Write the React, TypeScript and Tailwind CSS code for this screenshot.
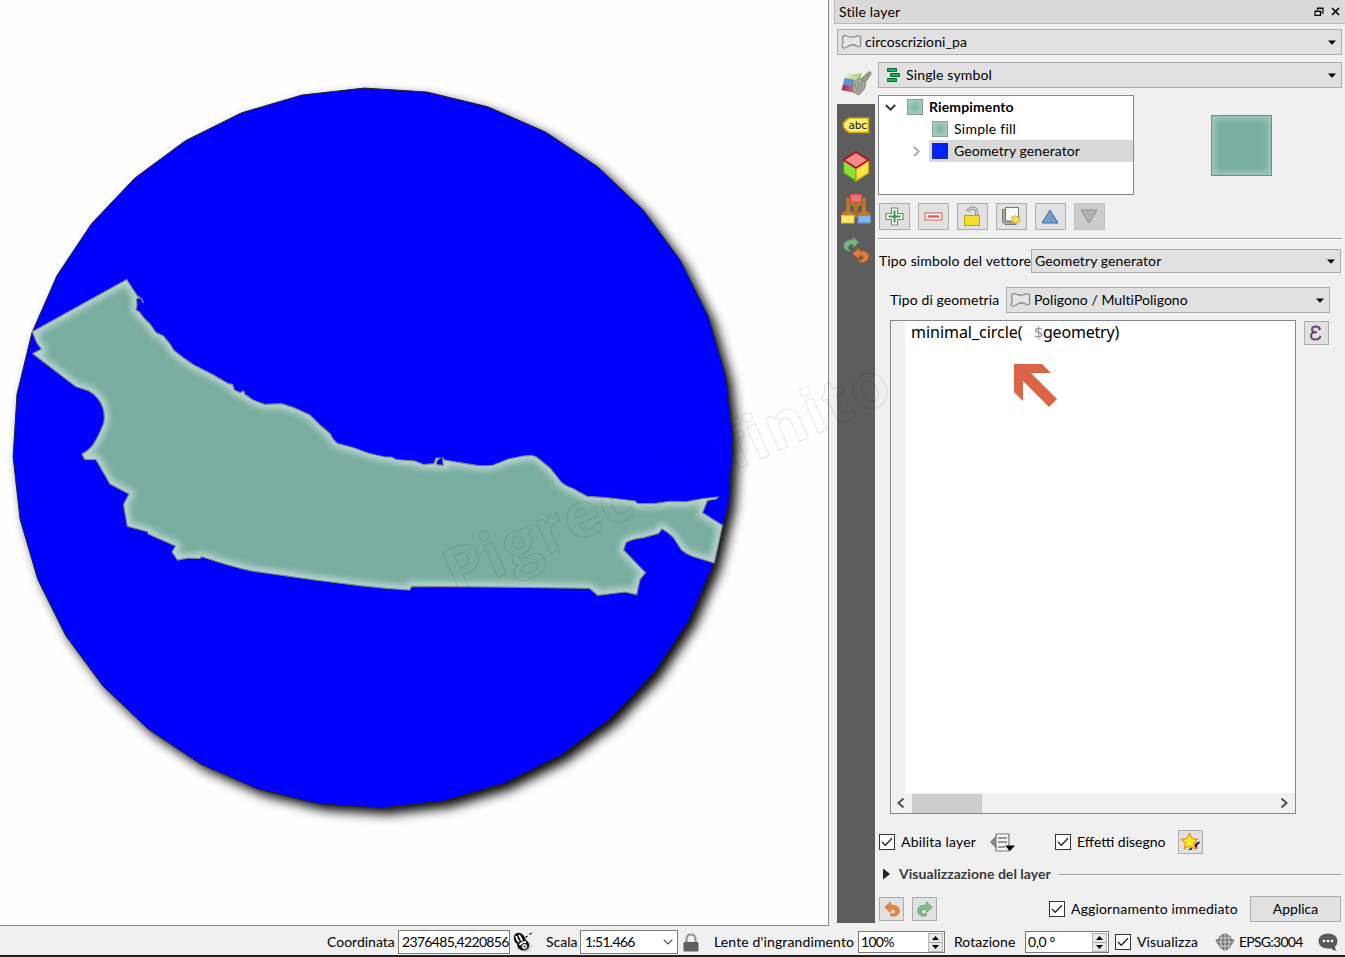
import React from "react";

const CX = 373;
const CY = 448;
const R = 360;
const circlePoints = Array.from({ length: 36 }, (_, i) => {
  const a = ((i * 10 - 1.4) * Math.PI) / 180;
  return `${(CX + R * Math.sin(a)).toFixed(1)},${(CY - R * Math.cos(a)).toFixed(1)}`;
}).join(" ");

const LAND =
  "M126.700 279.500L137.300 296L139 298L136.500 299L137 305L136 310L139.500 312L143.300 317.300L150 324L156 332.500L163.500 336L170 344L174 350.500Q183 358 193.500 364.700L213 374.700L228.500 383.700L232.500 384.500L234.500 390L240 392.500L244 391L244.500 394L253 400L264.500 404.300L281.500 403.700L293.500 407.500L310 415L320 425L330 433.500Q333 440 337.500 443.500L353 447.500L370 453.700L385 457L391.500 457L396.500 459.700L415 461L423.500 464.500L434 463.700L436 458L440 458L436.500 461.500L436.700 464.700L443.300 465.300L442.500 458L444.500 460L460 462.700L476.500 465.300Q487 466 493.500 465L508.500 459L523.500 456L531.500 455.300L536.500 457L550 468L558 478Q562 485 573 488.500L587 496.300L606.500 497.700L635 501L637.500 503.300L653.500 503.700L670 501.300L686.500 501.700L703.500 498.500L718 497L716.500 499L707.500 500.500L702.500 512.700L722.500 525.300L714.300 563L693.500 556.700Q686 554 681.500 550L673.500 537.700Q668 532 662 528.700L658.500 533.500L643.500 537.700Q632 539 626 542.500L623.500 550L645.500 572.700L640 579.500L636.700 594.700L625 592L597.500 595.300L589.500 588.300L520 587.300L411.700 586.300L409.700 590L386.700 588.300L360 585.700L315 580L250 570.700Q230 566 201.700 556.700L200 558.500L188.500 558L177.500 560L172 552L175.500 546L148.300 534L147.500 531.700L127.300 526.300L123.500 504.500L129 494L110 484L96 459.700L84.700 459.300L82 454Q91 449 95 441.700Q101 431 104 422Q105 412 102.500 406.700Q99 397 88.500 390.700L76 386.700L32.700 353.700L41.300 349L36.700 342.700L32.300 331.700Z";

function MapCanvas() {
  return (
    <svg width="828" height="925" viewBox="0 0 828 925" className="block">
      <defs>
        <filter id="shadow" x="-10%" y="-10%" width="120%" height="120%">
          <feGaussianBlur stdDeviation="6" />
        </filter>
        <filter id="glow" x="-10%" y="-10%" width="120%" height="120%">
          <feGaussianBlur stdDeviation="3" />
        </filter>
        <clipPath id="land">
          <path d={LAND} />
        </clipPath>
      </defs>
      <rect width="828" height="925" fill="#fefefe" />
      <polygon points={circlePoints} fill="#000" filter="url(#shadow)" transform="translate(6 6)" />
      <polygon points={circlePoints} fill="#0000ff" stroke="#222" strokeWidth="1" />
      <path d={LAND} fill="#78ada0" />
      <g clipPath="url(#land)">
        <path d={LAND} fill="none" stroke="#b9d6ce" strokeWidth="9.500" filter="url(#glow)" />
      </g>
      <path d={LAND} fill="none" stroke="#7b8580" strokeWidth="1.200" />
      <path d="M137.300 296Q141 297 143.500 303" fill="none" stroke="#7b8580" strokeWidth="1.500" />
    </svg>
  );
}

function Arrow() {
  return (
    <svg width="8" height="5" viewBox="0 0 8 5" className="block shrink-0">
      <path d="M0 .5H8L4 4.700Z" fill="#000" />
    </svg>
  );
}

function PolyIcon() {
  return (
    <svg width="21" height="17" viewBox="0 0 21 17" className="block shrink-0">
      <path
        d="M1.500 4.500Q1.500 1.500 4.500 1.500Q10 4.500 16 2Q19.500 1.200 19.500 3.500V11.500Q19 13.500 16.500 12.500Q11.500 8.800 6.500 12.800Q1.500 15.500 1.200 12.500Q2.800 8.500 1.500 4.500Z"
        fill="#e6e6e6"
        stroke="#8a8a8a"
        strokeWidth="1.300"
      />
    </svg>
  );
}

function Combo({ className, children }: { className: string; children: React.ReactNode }) {
  return (
    <div className={`flex items-center border border-[#adadad] bg-[#e1e1e1] ${className}`}>
      <div className="flex flex-1 items-center">{children}</div>
      <Arrow />
    </div>
  );
}

function Check() {
  return (
    <span className="flex h-4 w-4 shrink-0 items-center justify-center border border-[#333] bg-white">
      <svg width="12" height="10" viewBox="0 0 12 10">
        <path d="M1 5L4.300 8.300L11 1.300" fill="none" stroke="#222" strokeWidth="1.300" />
      </svg>
    </span>
  );
}

function ToolButton({ children, disabled }: { children: React.ReactNode; disabled?: boolean }) {
  return (
    <div
      className={
        disabled
          ? "flex h-[27px] w-[31px] items-center justify-center border border-[#bfbfbf] bg-[#cccccc] pr-px pb-px"
          : "flex h-[27px] w-[31px] items-center justify-center border border-[#adadad] bg-[#e1e1e1] pr-px pb-px"
      }
    >
      {children}
    </div>
  );
}

function CurlArrow({ color, edge, flip, size }: { color: string; edge: string; flip?: boolean; size: number }) {
  return (
    <svg width={size} height={size} viewBox="0 0 16 16" className="block">
      <path
        transform={flip ? "translate(16 0) scale(-1 1)" : undefined}
        d="M.8 6.200L6.500 1V4.200Q15.300 3.800 15.300 9.800Q15.200 14.600 9.500 15.200L6.500 14.500V13Q11.800 13.200 11.700 10.300Q11.500 8.200 6.500 8.300V11.500Z"
        fill={color}
        stroke={edge}
        strokeWidth=".7"
      />
    </svg>
  );
}

function Sidebar() {
  return (
    <div className="flex w-[38px] flex-col">
      <div className="flex h-[42px] items-center justify-center">
        <svg width="32" height="26" viewBox="0 0 32 26">
          <defs>
            <linearGradient id="styleGreen" x1="0" x2="1"><stop offset="0" stopColor="#e9efe0" /><stop offset="1" stopColor="#a9c96a" /></linearGradient>
            <linearGradient id="styleRed" x1="0" x2="1"><stop offset="0" stopColor="#a3224c" /><stop offset="1" stopColor="#d793a8" /></linearGradient>
          </defs>
          <path d="M6 3Q14 5 22 3L20 11L5 9Z" fill="url(#styleGreen)" />
          <path d="M4.500 8L14 9.500V17L3 14.500Z" fill="#5b93d3" />
          <path d="M3 14.500L14 16L19 24Q11 22 1.500 20Z" fill="url(#styleRed)" />
          <path d="M12 12Q18 10 20 8L26 14Q25 20 19 25Q15 24 12 20Q14 16 12 12Z" fill="#a9aaa0" stroke="#77796c" strokeWidth=".8" />
          <path d="M15 13L17 22M18 12L20 22M21 12L22 19" stroke="#7c7d74" strokeWidth=".8" />
          <path d="M21 9L28.500 2Q31.500 1 31 4L25 13Z" fill="#a19c80" stroke="#7d775f" strokeWidth=".8" />
        </svg>
      </div>
      <div className="flex h-[819px] flex-col items-center bg-[#5d5d5d] pt-[12px]">
        <div className="h-[35px]">
          <svg width="28" height="18" viewBox="0 0 28 18" className="block">
            <path d="M7 2H26.500V16.500H7Q4.500 15 1.500 11V7Q4.500 3.500 7 2Z" fill="#ffee76" stroke="#c8a400" strokeWidth="1.600" />
            <text x="6.500" y="13.200" fontFamily="DejaVu Sans" fontSize="10.500" textLength="18.500" fill="#111">abc</text>
          </svg>
        </div>
        <div className="h-[42px]">
          <svg width="28" height="31" viewBox="0 0 28 31" className="block">
            <path d="M1.500 9L14 17V30L1.500 22Z" fill="#8ce03a" stroke="#4c9a00" strokeWidth="1.300" />
            <path d="M26.500 9L14 17V30L26.500 22Z" fill="#ffe34c" stroke="#c8a400" strokeWidth="1.300" />
            <path d="M14 1L26.500 9L14 17L1.500 9Z" fill="#f28a8a" stroke="#b00c18" strokeWidth="1.500" />
          </svg>
        </div>
        <div className="h-[44px]">
          <svg width="32" height="32" viewBox="0 0 32 32" className="block">
            <path d="M10 9H22V12.500Q18 13 18 15L17.500 25H14.500L14 15Q14 13 10 12.500Z" fill="#b5732a" />
            <path d="M6.500 5Q8 3.500 9.500 5L10 17Q10 19 14 19.500V23H2V19.500Q6 19 6 17Z" fill="#c07b30" stroke="#9a5d1d" strokeWidth=".5" />
            <path d="M22.500 5Q24 3.500 25.500 5L26 17Q26 19 30 19.500V23H18V19.500Q22 19 22 17Z" fill="#c07b30" stroke="#9a5d1d" strokeWidth=".5" />
            <rect x="10.500" y="1.500" width="11" height="7.500" fill="#f0747a" stroke="#d8474e" />
            <rect x="1.500" y="22.500" width="12.500" height="7.500" fill="#ffe96b" stroke="#e0be35" />
            <rect x="18" y="22.500" width="12.500" height="7.500" fill="#83b3ea" stroke="#5c93d0" />
          </svg>
        </div>
        <svg width="28" height="28" viewBox="0 0 28 28" className="-mt-px block">
          <path d="M1.500 9Q2.500 3.500 11 3.500V.8L17 6.500L11 12V8.500Q6 8 6.500 13L9.500 15Q1.500 16.500 1.500 9Z" fill="#78b083" stroke="#4d8c5b" strokeWidth=".8" />
          <path d="M10.500 17.500L17 12V15Q26.500 14.500 26.500 20.500Q26.500 25 21 26.300L17 26V24.500Q22.500 23 21.500 21Q20 19.500 17 19.500V23Z" fill="#e07d42" stroke="#c55d1c" strokeWidth=".8" />
        </svg>
      </div>
    </div>
  );
}

function Swatch() {
  return <span className="h-4 w-4 border border-[#8b9b96] bg-[radial-gradient(#7db3a6,#a3cbc0_75%)]" />;
}

function SymbolTree() {
  return (
    <div className="h-[100px] w-[256px] border border-[#828790] bg-white text-black">
      <div className="flex h-[22px] items-center pl-[6px]">
        <svg width="11" height="7" viewBox="0 0 11 7"><path d="M.8 1L5.500 5.700L10.200 1" fill="none" stroke="#333" strokeWidth="1.800" /></svg>
        <span className="ml-[11px] flex"><Swatch /></span>
        <span className="ml-[6px] font-bold tracking-[0.13px]">Riempimento</span>
      </div>
      <div className="flex h-[22px] items-center pl-[53px]">
        <Swatch />
        <span className="ml-[6px] tracking-[0.25px]">Simple fill</span>
      </div>
      <div className="flex h-[22px] items-center">
        <span className="flex w-[50px] justify-end pr-[9px]">
          <svg width="7" height="11" viewBox="0 0 7 11"><path d="M1 .8L5.700 5.500L1 10.200" fill="none" stroke="#a0a0a0" strokeWidth="1.700" /></svg>
        </span>
        <div className="flex h-[22px] flex-1 items-center bg-[#d9d9d9] pl-[3px]">
          <span className="h-4 w-4 border border-[#1a2a9c] bg-[#0022ff]" />
          <span className="ml-[6px] tracking-[0.08px]">Geometry generator</span>
        </div>
      </div>
    </div>
  );
}

function SymbolTools() {
  return (
    <div className="mt-2 ml-px flex gap-2">
      <ToolButton>
        <svg width="19" height="19" viewBox="0 0 19 19">
          <path d="M6.500 1H12.500V6.500H18V12.500H12.500V18H6.500V12.500H1V6.500H6.500Z" fill="#fff" stroke="#5b9a68" strokeWidth="1.200" />
          <path d="M9.500 3.500V15.500M3.500 9.500H15.500" stroke="#3f9150" strokeWidth="2" />
        </svg>
      </ToolButton>
      <ToolButton>
        <svg width="19" height="9" viewBox="0 0 19 9">
          <rect x="1" y="1" width="17" height="7" fill="#fff" stroke="#ef6a6a" strokeWidth="1.200" />
          <rect x="3.500" y="3.300" width="12" height="2.400" fill="#ef5656" />
        </svg>
      </ToolButton>
      <ToolButton>
        <svg width="18" height="21" viewBox="0 0 18 21">
          <path d="M5 5.500Q6 2 9.500 2Q14 2.300 13.700 7V10" fill="none" stroke="#858585" strokeWidth="3" />
          <path d="M5 5.500Q6 2 9.500 2Q14 2.300 13.700 7V10" fill="none" stroke="#d4d4d4" strokeWidth="1.300" />
          <rect x="1.500" y="9.500" width="15" height="10" fill="#f1dc32" stroke="#c9a700" />
        </svg>
      </ToolButton>
      <ToolButton>
        <svg width="20" height="20" viewBox="0 0 20 20">
          <path d="M1.500 3.500H5V15H15V18.500H4L1.500 16Z" fill="#a8a8a0" stroke="#7a7a74" />
          <rect x="4.500" y="1.500" width="13" height="13.500" fill="#fafafa" stroke="#777" />
          <path d="M14.500 9.500L16 11L18.500 11L18 13.500L19 15.500L16.500 16L14.500 17.500L12.500 16L10.500 15.500L11.200 13L10.800 11L13 11Z" fill="#f4de5b" stroke="#bea01c" strokeWidth=".8" />
        </svg>
      </ToolButton>
      <ToolButton>
        <svg width="18" height="15" viewBox="0 0 18 15"><path d="M9 1L17 14H1Z" fill="#6f9dcc" stroke="#416d9c" /></svg>
      </ToolButton>
      <ToolButton disabled>
        <svg width="18" height="15" viewBox="0 0 18 15"><path d="M1 1H17L9 14Z" fill="#b3b3b3" stroke="#8f8f8f" /></svg>
      </ToolButton>
    </div>
  );
}

function Editor() {
  return (
    <div className="mt-[7px] ml-3 flex">
      <div className="flex h-[494px] w-[406px] flex-col border border-[#828790] bg-white">
        <div className="flex flex-1">
          <div className="w-[14px] bg-[#f0f0f0]" />
          <div className="flex-1 pl-[6px]">
            <div className="flex h-[22px] items-center font-['Noto_Sans',sans-serif] text-[16px]">
              <span className="w-[123px] tracking-[-0.03px]">minimal_circle(</span>
              <span className="tracking-[-0.2px]"><span className="text-[#969696]">$</span>geometry)</span>
            </div>
            <svg width="43" height="43" viewBox="0 0 43 43" className="mt-[21px] ml-[103px]">
              <path d="M0 0H28L37 9H17L43 35L35 43L9 17V37L0 28Z" fill="#da6445" />
            </svg>
          </div>
        </div>
        <div className="flex h-5 items-center bg-[#f0f0f0]">
          <svg width="20" height="12" viewBox="0 0 20 12"><path d="M12.500 1.500L7.500 6L12.500 10.500" fill="none" stroke="#505050" strokeWidth="2" /></svg>
          <div className="ml-px h-[19px] w-[70px] bg-[#cdcdcd]" />
          <svg width="20" height="12" viewBox="0 0 20 12" className="ml-auto"><path d="M6.500 1.500L11.500 6L6.500 10.500" fill="none" stroke="#505050" strokeWidth="2" /></svg>
        </div>
      </div>
      <div className="mt-px ml-2 flex h-6 w-[25px] items-center justify-center border border-[#adadad] bg-[#e1e1e1]">
        <svg width="13" height="16" viewBox="0 0 13 16" className="-ml-0.5">
          <path d="M10.800 4.200Q10.500 1.500 7 1.500Q3 1.600 3 4.500Q3.200 7.200 6.500 7.300H8M6.500 7.300Q2 7.600 2 11Q2.200 14.500 6.500 14.500Q10.800 14.300 11.500 11" fill="none" stroke="#6d4379" strokeWidth="2" />
          <circle cx="10.300" cy="4" r="1.300" fill="#6d4379" />
        </svg>
      </div>
    </div>
  );
}

function LayerOptions() {
  return (
    <>
      <div className="mt-[15px] ml-px flex h-[26px] items-center">
        <Check />
        <span className="ml-[6px] w-[89px] tracking-[0.2px]">Abilita layer</span>
        <svg width="26" height="20" viewBox="0 0 26 20" className="mt-px">
          <path d="M6 1H19V18H6V14L2 9L6 4Z" fill="#f5f5f5" stroke="#777" strokeWidth="1.200" />
          <path d="M.5 9L6 3.500V14.500Z" fill="#8a8a8a" stroke="#666" strokeWidth=".8" />
          <path d="M8 5H17M8 9H17M8 14H15" stroke="#777" strokeWidth="1.500" />
          <path d="M15 12.500H25L20 18Z" fill="#000" />
        </svg>
        <span className="ml-[39px]"><Check /></span>
        <span className="ml-[6px] w-[101px]">Effetti disegno</span>
        <div className="flex h-6 w-[25px] items-center justify-center border border-[#adadad] bg-[#e1e1e1]">
          <svg width="20" height="20" viewBox="0 0 20 20" className="-ml-0.5">
            <path d="M14.500 14Q14 10.500 20 9.500L19 12L17.500 12.500L16.500 18L15.500 15Z M8 18L12.500 14.500L11.500 18Z" fill="#222" />
            <path d="M9.500 1.500L12 6.500L17.500 7.500L13.500 11L14.500 16.500L9.500 14L4.500 16.500L5.500 11L1.500 7.500L7 6.500Z" fill="#ffee21" stroke="#f1931a" strokeWidth="1.300" />
          </svg>
        </div>
      </div>
      <div className="mt-[9px] flex h-5 items-center">
        <svg width="9" height="12" viewBox="0 0 9 12" className="ml-1"><path d="M1 .5L8 6L1 11.500Z" fill="#222" /></svg>
        <span className="ml-2 w-[152px] font-bold tracking-[0.04px] text-[#3a3a3a]">Visualizzazione del layer</span>
        <span className="mt-px ml-[7px] h-0.5 flex-1 border-t border-[#a0a0a0] bg-white" />
      </div>
      <div className="mt-3 ml-px flex h-[26px] items-center pr-px">
        <div className="flex h-6 w-[25px] items-center justify-center border border-[#adadad] bg-[#e1e1e1]">
          <CurlArrow color="#e8843f" edge="#cf6526" size={16} />
        </div>
        <div className="ml-2 flex h-6 w-[25px] items-center justify-center border border-[#adadad] bg-[#e1e1e1]">
          <CurlArrow color="#7ebc89" edge="#569463" flip size={16} />
        </div>
        <span className="ml-[112px]"><Check /></span>
        <span className="ml-[6px] tracking-[0.16px]">Aggiornamento immediato</span>
        <div className="ml-auto flex h-[26px] w-[91px] items-center justify-center border border-[#adadad] bg-[#e1e1e1]">Applica</div>
      </div>
    </>
  );
}

function StylePanel() {
  return (
    <div className="ml-[5px] flex w-[511px] flex-col">
      <div className="flex h-6 items-center border-b border-l border-[#b9b9b9] bg-[#dadada] pr-[5px] pl-1">
        <span className="flex-1 tracking-[0.15px]">Stile layer</span>
        <svg width="10" height="9" viewBox="0 0 10 9" className="mr-[7px]">
          <path d="M3.500 3V1H9V6H7M3 1.300H9" fill="none" stroke="#000" strokeWidth="1.200" />
          <path d="M1 4H6.500V8.300H1ZM1 4.300H6.500" fill="none" stroke="#000" strokeWidth="1.200" />
        </svg>
        <svg width="9" height="9" viewBox="0 0 9 9"><path d="M1 1L8 8M8 1L1 8" stroke="#000" strokeWidth="1.700" /></svg>
      </div>
      <div className="pt-[5px] pr-[3px] pl-[3px]">
        <Combo className="h-[26px] pr-[5px] pl-[3px]">
          <PolyIcon />
          <span className="ml-[3px] tracking-[0.08px]">circoscrizioni_pa</span>
        </Combo>
        <div className="mt-[7px] flex">
          <Sidebar />
          <div className="ml-[3px] flex-1">
            <Combo className="h-[26px] pr-[5px] pl-2">
              <svg width="13" height="14" viewBox="0 0 13 14">
                <path d="M.5 .5H9.500V3.500H.5ZM3.500 5.500H12.500V8.500H3.500ZM.5 10.500H9.500V13.500H.5Z" fill="#14b45d" stroke="#0c6b38" />
              </svg>
              <span className="ml-[6px] tracking-[0.15px]">Single symbol</span>
            </Combo>
            <div className="mt-[7px] flex">
              <SymbolTree />
              <div className="mt-5 ml-[77px] h-[61px] w-[61px] border border-[#7f8684] bg-[#78ada0] shadow-[inset_0_0_6px_3px_#a3cbc0]" />
            </div>
            <SymbolTools />
            <div className="mt-2 h-0.5 border-t border-[#a0a0a0] bg-white" />
            <div className="mt-[9px] ml-px flex h-6 items-center">
              <span className="w-[152px] tracking-[0.14px]">Tipo simbolo del vettore</span>
              <Combo className="h-6 w-[310px] pr-[5px] pl-[3px]"><span className="tracking-[0.1px]">Geometry generator</span></Combo>
            </div>
            <div className="mt-[14px] ml-3 flex h-[26px] items-center">
              <span className="w-[116px] tracking-[0.1px]">Tipo di geometria</span>
              <Combo className="h-[26px] w-[324px] pr-[5px] pl-[3px]">
                <PolyIcon />
                <span className="ml-[3px] tracking-[0.04px]">Poligono / MultiPoligono</span>
              </Combo>
            </div>
            <Editor />
            <LayerOptions />
          </div>
        </div>
      </div>
    </div>
  );
}

function Spin() {
  return (
    <span className="flex h-[19px] w-[15px] flex-col border border-[#b5b5b5] bg-[#e8e8e8]">
      <svg width="13" height="17" viewBox="0 0 13 17">
        <path d="M6.500 2L10 6H3Z M6.500 15L10 11H3Z" fill="#000" />
        <path d="M0 8.500H13" stroke="#aaa" />
      </svg>
    </span>
  );
}

function StatusBar() {
  return (
    <div className="flex h-[31px] items-center border-b-2 border-[#202127] pt-[3px] pl-[327px]">
      <span className="w-[71px]">Coordinata</span>
      <div className="flex h-6 w-[112px] items-center border border-[#7a7a7a] bg-white pl-[3px] tracking-[-0.68px]">2376485,4220856</div>
      <svg width="20" height="20" viewBox="0 0 20 20" className="ml-[3px]">
        <circle cx="13" cy="14.500" r="5.500" fill="#e2c9c9" />
        <path d="M1 4Q3 0 7 1Q11 2 13 8Q17 11 16 15Q14 19 9 18.500Q4 17 4 12Q0 9 1 4Z" fill="#111" />
        <path d="M3 4Q4 8 6 10M6 3Q8 6 9 9M6.500 13Q9 10 13 10" fill="none" stroke="#fff" strokeWidth="1.800" />
        <circle cx="11.500" cy="14.500" r="3" fill="#fff" stroke="#111" />
        <circle cx="11.500" cy="14.500" r="1" fill="#111" />
        <path d="M12.500 5.500L14.500 4M16.500 2.500L18.500 1" stroke="#111" strokeWidth="1.300" />
      </svg>
      <span className="ml-[13px] w-[34px]">Scala</span>
      <div className="flex h-6 w-[98px] items-center justify-between border border-[#7a7a7a] bg-white pr-1 pl-1">
        <span className="tracking-[-0.75px]">1:51.466</span>
        <svg width="10" height="6" viewBox="0 0 10 6"><path d="M.7 .7L5 5L9.300 .7" fill="none" stroke="#444" strokeWidth="1.100" /></svg>
      </div>
      <svg width="16" height="19" viewBox="0 0 16 19" className="ml-[5px]">
        <path d="M3.500 10V6Q3.500 1.500 8 1.500Q12.500 1.500 12.500 6V10" fill="none" stroke="#999" strokeWidth="2.200" />
        <rect x=".5" y="9" width="15" height="9.500" rx="1" fill="#5f5f5f" />
      </svg>
      <span className="ml-[15px] w-[144px] tracking-[0.13px]">Lente d'ingrandimento</span>
      <div className="flex h-[22px] w-[87px] items-center justify-between border border-[#7a7a7a] bg-white pr-px pl-[2px]">
        <span className="tracking-[-0.7px]">100%</span>
        <Spin />
      </div>
      <span className="ml-[9px] w-[71px] tracking-[0.05px]">Rotazione</span>
      <div className="flex h-[22px] w-[84px] items-center justify-between border border-[#7a7a7a] bg-white pr-px pl-[2px]">
        <span className="tracking-[-0.4px]">0,0 °</span>
        <Spin />
      </div>
      <span className="ml-[6px]"><Check /></span>
      <span className="ml-[6px] w-[78px] tracking-[0.1px]">Visualizza</span>
      <svg width="20" height="18" viewBox="0 0 20 18">
        <path d="M10 .5Q15 1 17 6L19.500 7Q19 10 17 11Q15 17 10 17.500Q5 17 3 11Q.5 10 .5 7L3 6Q5 1 10 .5Z" fill="#777" />
        <path d="M3 5H17M1 9H19M4 13H16M10 1V17M7 1.500Q4 9 7 16.500M13 1.500Q16 9 13 16.500" fill="none" stroke="#f0f0f0" strokeWidth=".7" />
      </svg>
      <span className="ml-[4px] w-[79px] tracking-[-0.75px]">EPSG:3004</span>
      <svg width="20" height="18" viewBox="0 0 20 18">
        <path d="M10 .5C15.500 .5 19.500 3.500 19.500 8C19.500 10.500 18.500 12.500 17 13.500Q17 16 18.500 17.800Q14.500 17.500 13 15.200Q11.500 15.500 10 15.500C4.500 15.500 .5 12.500 .5 8C.5 3.500 4.500 .5 10 .5Z" fill="#595959" />
        <circle cx="6" cy="8" r="1.300" fill="#fff" /><circle cx="10" cy="8" r="1.300" fill="#fff" /><circle cx="14" cy="8" r="1.300" fill="#fff" />
      </svg>
    </div>
  );
}

export default function App() {
  return (
    <div className="relative h-[957px] w-[1345px] overflow-hidden bg-[#f0f0f0] font-['Lato',sans-serif] text-[14px] leading-[20px] whitespace-nowrap text-black">
      <div className="flex h-[926px]">
        <div className="h-[926px] w-[829px] border-r border-b border-[#828790]">
          <MapCanvas />
        </div>
        <StylePanel />
      </div>
      <StatusBar />
      <svg width="1345" height="957" viewBox="0 0 1345 957" className="pointer-events-none absolute inset-0">
        <text
          transform="translate(456 596) rotate(-24.2)"
          fontFamily="Open Sans"
          fontWeight="bold"
          fontSize="63"
          textLength="481"
          fill="none"
          stroke="#000"
          strokeOpacity=".1"
          strokeWidth="1"
        >
          Pigrecoinfinito
        </text>
      </svg>
    </div>
  );
}
